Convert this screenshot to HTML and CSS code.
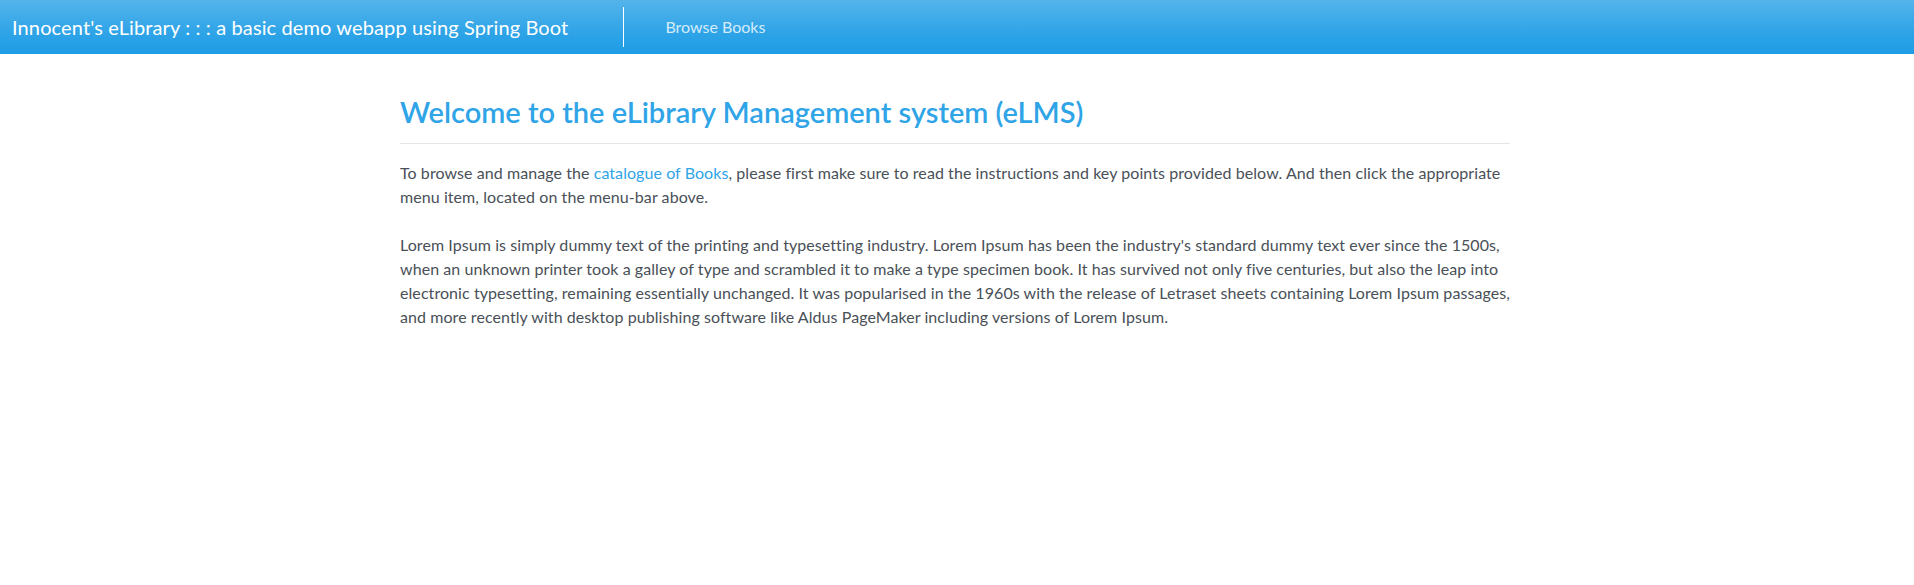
FILE: index.html
```html
<!DOCTYPE html>
<html lang="en">
<head>
<meta charset="utf-8">
<title>Innocent's eLibrary</title>
<link rel="stylesheet" href="styles.css">
</head>
<body>
<nav class="navbar">
  <a class="brand" href="#">Innocent's eLibrary : : : a basic demo webapp using Spring Boot</a>
  <span class="divider"></span>
  <a class="nav-link" href="#">Browse Books</a>
</nav>
<main class="container">
  <h3 class="title">Welcome to the eLibrary Management system (eLMS)</h3>
  <hr class="rule">
  <p>To browse and manage the <a href="#">catalogue of Books</a>, please first make sure to read the instructions and key points provided below. And then click the appropriate menu item, located on the menu-bar above.</p>
  <p>Lorem Ipsum is simply dummy text of the printing and typesetting industry. Lorem Ipsum has been the industry's standard dummy text ever since the 1500s, when an unknown printer took a galley of type and scrambled it to make a type specimen book. It has survived not only five centuries, but also the leap into electronic typesetting, remaining essentially unchanged. It was popularised in the 1960s with the release of Letraset sheets containing Lorem Ipsum passages, and more recently with desktop publishing software like Aldus PageMaker including versions of Lorem Ipsum.</p>
</main>
</body>
</html>
```
FILE: styles.css
```css
html, body {
  margin: 0;
  padding: 0;
  background: #fff;
}
body {
  font-family: "Segoe UI", Lato, "Noto Sans", sans-serif;
  font-size: 16px;
  line-height: 1.5;
  color: #495057;
}
a {
  color: #2fa4e7;
  text-decoration: none;
}
.navbar {
  display: flex;
  align-items: center;
  height: 54px;
  padding: 0 12px;
  background-image: linear-gradient(#54b4eb, #2fa4e7 60%, #1d9ce5);
}
.brand {
  color: #fff;
  font-size: 20px;
  line-height: 30px;
  letter-spacing: 0.12px;
  white-space: nowrap;
}
.divider {
  width: 1px;
  height: 40px;
  background: #fff;
  margin-left: 55px;
  margin-right: 41px;
}
.nav-link {
  color: rgba(255, 255, 255, 0.8);
  font-size: 16px;
}
.container {
  width: 1110px;
  margin-left: calc(50% - 557px);
}
.title {
  margin: 40px 0 0;
  font-size: 29px;
  line-height: 35px;
  font-weight: 600;
  color: #2fa4e7;
}
.rule {
  margin: 14px 0 17px;
  border: 0;
  border-top: 1px solid rgba(0, 0, 0, 0.1);
}
p {
  margin: 0 0 24px;
  letter-spacing: 0.07px;
}
```
